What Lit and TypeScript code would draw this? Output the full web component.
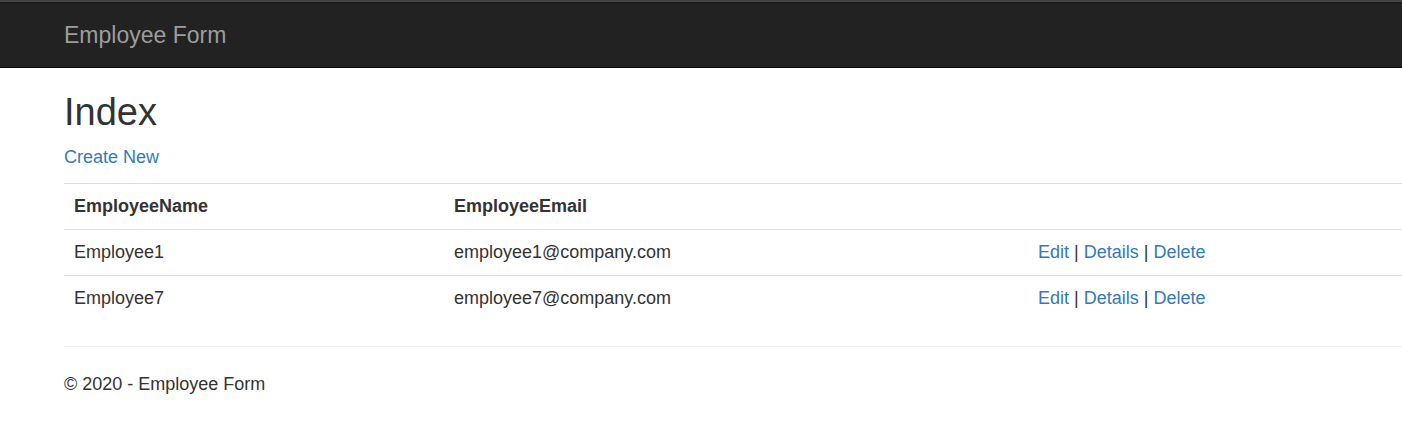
import { LitElement, html, css } from "lit";
import { customElement, state } from "lit/decorators.js";

interface Employee {
  name: string;
  email: string;
}

@customElement("app-root")
export class AppRoot extends LitElement {
  static styles = css`
    :host {
      display: block;
      overflow-x: clip;
      font-family: "Liberation Sans", Arial, sans-serif;
      font-size: 18px;
      line-height: 24px;
      color: #333;
      background: #fff;
    }
    a {
      color: #337ab7;
      text-decoration: none;
    }
    a:hover {
      text-decoration: underline;
    }
    .navbar {
      padding: 21px 64px 20px;
      display: flex;
      align-items: center;
      background: #222;
      border-top: 2px solid #444;
      border-bottom: 1px solid #080808;
      box-shadow: inset 0 2px #1c1c1c;
    }
    .brand {
      color: #9d9d9d;
      font-size: 23px;
    }
    .brand:hover {
      color: #fff;
      text-decoration: none;
    }
    .container {
      padding-left: 64px;
    }
    h2 {
      margin: 0;
      padding-top: 23px;
      font-size: 38px;
      line-height: 42px;
      font-weight: 500;
    }
    .create {
      margin: 12px 0 14px;
    }
    table {
      width: 100%;
      border-collapse: collapse;
      table-layout: fixed;
    }
    .col-name {
      width: 28.4%;
    }
    .col-email {
      width: 43.65%;
    }
    th,
    td {
      padding: 10px;
      line-height: 25px;
      text-align: left;
      border-top: 1px solid #ddd;
    }
    hr {
      margin: 25px 0;
      border: 0;
      border-top: 1px solid #eee;
    }
    footer p {
      margin: 0 0 14px;
    }
  `;

  @state()
  private employees: Employee[] = [
    { name: "Employee1", email: "employee1@company.com" },
    { name: "Employee7", email: "employee7@company.com" },
  ];

  render() {
    return html`
      <nav class="navbar"><a class="brand" href="#">Employee Form</a></nav>
      <main class="container">
        <h2>Index</h2>
        <p class="create"><a href="#create">Create New</a></p>
        <table>
          <colgroup>
            <col class="col-name" />
            <col class="col-email" />
            <col />
          </colgroup>
          <tbody>
            <tr>
              <th scope="col">EmployeeName</th>
              <th scope="col">EmployeeEmail</th>
              <td></td>
            </tr>
            ${this.employees.map(
              (e) => html`<tr>
                <td>${e.name}</td>
                <td>${e.email}</td>
                <td>
                  <a href="#edit">Edit</a> | <a href="#details">Details</a> |
                  <a href="#delete">Delete</a>
                </td>
              </tr>`
            )}
          </tbody>
        </table>
        <hr />
        <footer><p>© 2020 - Employee Form</p></footer>
      </main>
    `;
  }
}
